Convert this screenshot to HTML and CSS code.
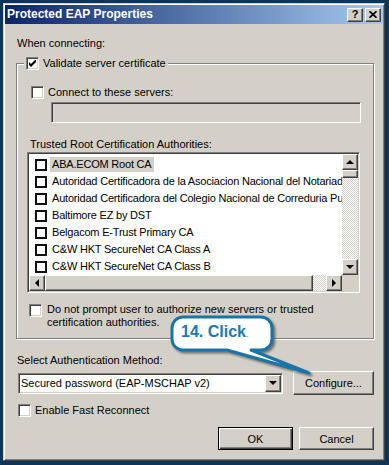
FILE: index.html
```html
<!DOCTYPE html>
<html lang="en">
<head>
  <meta charset="UTF-8">
  <title>Protected EAP Properties</title>
  <link rel="stylesheet" href="styles.css">
</head>
<body>
<div class="window">
  <div class="titlebar">
    <span class="title">Protected EAP Properties</span>
    <div class="tbtns">
      <span class="tbtn help">?</span>
      <span class="tbtn close"><svg width="8" height="7" viewBox="0 0 8 7"><path d="M0.5 0.3 L7.5 6.7 M7.5 0.3 L0.5 6.7" stroke="#000" stroke-width="1.7"/></svg></span>
    </div>
  </div>
  <div class="content">
    <div class="label first">When connecting:</div>
    <fieldset class="group">
      <legend><span class="chk"><svg width="7" height="7" viewBox="0 0 7 7"><path d="M0 2 L2 4 L7 -1 V2 L2 7 L0 5 Z" fill="#000"/></svg></span>Validate server certificate</legend>
      <div class="row connect"><span class="chk"></span>Connect to these servers:</div>
      <div class="textbox"></div>
      <div class="label trusted">Trusted Root Certification Authorities:</div>
      <div class="listbox">
        <div class="items">
          <div class="item"><span class="lchk"></span><span class="txt sel">ABA.ECOM Root CA</span></div>
          <div class="item"><span class="lchk"></span><span class="txt">Autoridad Certificadora de la Asociacion Nacional del Notariado Mexicano</span></div>
          <div class="item"><span class="lchk"></span><span class="txt">Autoridad Certificadora del Colegio Nacional de Correduria Publica Mexicana</span></div>
          <div class="item"><span class="lchk"></span><span class="txt">Baltimore EZ by DST</span></div>
          <div class="item"><span class="lchk"></span><span class="txt">Belgacom E-Trust Primary CA</span></div>
          <div class="item"><span class="lchk"></span><span class="txt">C&amp;W HKT SecureNet CA Class A</span></div>
          <div class="item"><span class="lchk"></span><span class="txt">C&amp;W HKT SecureNet CA Class B</span></div>
        </div>
        <div class="vscroll">
          <span class="sbtn up"></span>
          <span class="thumb vthumb"></span>
          <span class="track"></span>
          <span class="sbtn down"></span>
        </div>
        <div class="hscroll">
          <span class="sbtn left"></span>
          <span class="thumb hthumb"></span>
          <span class="track"></span>
          <span class="sbtn right"></span>
        </div>
        <div class="corner"></div>
      </div>
      <div class="row prompt"><span class="chk"></span><span>Do not prompt user to authorize new servers or trusted<br>certification authorities.</span></div>
    </fieldset>
    <div class="label method">Select Authentication Method:</div>
    <div class="methodrow">
      <div class="combo"><span class="combotext">Secured password (EAP-MSCHAP v2)</span><span class="sbtn down"></span></div>
      <button class="btn configure">Configure...</button>
    </div>
    <div class="row fast"><span class="chk"></span>Enable Fast Reconnect</div>
    <div class="actions">
      <button class="btn default">OK</button>
      <button class="btn">Cancel</button>
    </div>
  </div>
</div>
<div class="callout">
  <svg class="bubble" width="150" height="66" viewBox="0 0 150 66"><path d="M18 5 H96 A11 11 0 0 1 107 16 V27 A11 11 0 0 1 96 38 H86 L144 61 L62 38 H18 A11 11 0 0 1 7 27 V16 A11 11 0 0 1 18 5 Z" fill="#fff" stroke="#1b74a8" stroke-width="3" stroke-linejoin="round"/></svg>
  <span class="calltext">14. Click<span class="dot">.</span></span>
</div>
</body>
</html>
```

FILE: styles.css
```css
html body {
    margin: 0;
    padding: 0;
}
body {
    background: #0d3656;
    font-family: "Liberation Sans", Arial, sans-serif;
    font-size: 11px;
    line-height: 13px;
    color: #000;
}
.window {
    box-sizing: border-box;
    width: 382px;
    height: 458px;
    margin: 3px 0 0 3px;
    padding: 1px;
    background: #d4d0c8;
    border: 1px solid;
    border-color: #d4d0c8 #404040 #404040 #d4d0c8;
    box-shadow: inset 1px 1px #fff, inset -1px -1px #808080;
}
.titlebar {
    height: 19px;
    display: flex;
    align-items: center;
    justify-content: space-between;
    padding: 0 2px;
    background: linear-gradient(to right, #0a246a, #a6caf0);
}
.title {
    color: #fff;
    font-weight: bold;
    font-size: 12px;
}
.tbtns {
    display: flex;
    gap: 2px;
}
.tbtn, .sbtn, .thumb, .btn {
    box-sizing: border-box;
    background: #d4d0c8;
    border: 1px solid;
    border-color: #fff #404040 #404040 #fff;
    box-shadow: inset -1px -1px #808080;
}
.tbtn {
    width: 16px;
    height: 14px;
    display: flex;
    align-items: center;
    justify-content: center;
    font-weight: bold;
    font-size: 11px;
}
.content {
    padding: 13px 9px 0 11px;
}
.label.first, .label.method {
    margin-left: 1px;
}
.group {
    margin: 7px 0 0;
    padding: 0 13px 9px 10px;
    border: 1px solid #808080;
    box-shadow: inset 1px 1px #fff, 1px 1px #fff;
    min-width: 0;
}
.group legend {
    display: flex;
    align-items: center;
    gap: 4px;
    margin-left: -3px;
    padding: 0 2px;
    background: #d4d0c8;
}
.chk {
    box-sizing: border-box;
    width: 13px;
    height: 13px;
    flex: none;
    display: flex;
    align-items: center;
    justify-content: center;
    background: #fff;
    border: 1px solid;
    border-color: #808080 #fff #fff #808080;
    box-shadow: inset 1px 1px #404040, inset -1px -1px #d4d0c8;
}
.row {
    display: flex;
    align-items: center;
    gap: 4px;
}
.connect {
    margin: 16px 0 0 4px;
}
.textbox {
    box-sizing: border-box;
    width: 310px;
    height: 21px;
    margin: 3px 0 0 24px;
    border: 1px solid;
    border-color: #808080 #fff #fff #808080;
    box-shadow: inset 1px 1px #404040, inset -1px -1px #d4d0c8;
}
.trusted {
    margin: 15px 0 0 3px;
}
.listbox {
    box-sizing: border-box;
    height: 141px;
    margin-top: 1px;
    padding: 1px;
    display: grid;
    grid-template-columns: 1fr 16px;
    grid-template-rows: 121px 16px;
    background: #fff;
    border: 1px solid;
    border-color: #808080 #fff #fff #808080;
    box-shadow: inset 1px 1px #404040, inset -1px -1px #d4d0c8;
}
.items {
    overflow: hidden;
    padding-top: 2px;
}
.item {
    height: 17px;
    display: flex;
    align-items: center;
    gap: 3px;
    padding-left: 6px;
    white-space: nowrap;
    letter-spacing: -0.2px;
}
.lchk {
    box-sizing: border-box;
    width: 12px;
    height: 12px;
    flex: none;
    border: 2px solid #111;
    background: #fff;
}
.txt {
    padding: 0 2px;
    line-height: 15px;
}
.sel {
    background: #d4d0c8;
}
.vscroll {
    display: flex;
    flex-direction: column;
}
.hscroll {
    display: flex;
}
.sbtn {
    width: 16px;
    height: 16px;
    flex: none;
    display: flex;
    align-items: center;
    justify-content: center;
}
.sbtn::after {
    content: "";
    width: 0;
    height: 0;
}
.up::after {
    border: 4px solid transparent;
    border-top: 0;
    border-bottom: 4px solid #000;
}
.down::after {
    border: 4px solid transparent;
    border-bottom: 0;
    border-top: 4px solid #000;
}
.left::after {
    border: 4px solid transparent;
    border-left: 0;
    border-right: 4px solid #000;
}
.right::after {
    border: 4px solid transparent;
    border-right: 0;
    border-left: 4px solid #000;
}
.thumb {
    flex: none;
}
.vthumb {
    height: 8px;
}
.hthumb {
    width: 268px;
}
.track {
    flex: 1;
    background: repeating-conic-gradient(#fff 0 25%, #d4d0c8 0 50%) 0 0 / 2px 2px;
}
.corner {
    background: #d4d0c8;
}
.prompt {
    align-items: flex-start;
    gap: 5px;
    margin: 10px 0 0 2px;
}
.prompt .chk {
    margin-top: 1px;
}
.method {
    margin-top: 15px;
}
.methodrow {
    display: flex;
    align-items: center;
    margin-top: 4px;
    height: 24px;
}
.combo {
    box-sizing: border-box;
    width: 265px;
    height: 21px;
    margin-left: 2px;
    padding: 1px 1px 1px 2px;
    display: flex;
    align-items: center;
    justify-content: space-between;
    background: #fff;
    border: 1px solid;
    border-color: #808080 #fff #fff #808080;
    box-shadow: inset 1px 1px #404040, inset -1px -1px #d4d0c8;
}
.combo .sbtn {
    height: 17px;
}
.btn {
    font-family: inherit;
    font-size: 11px;
    color: #000;
    padding: 0;
}
.configure {
    width: 81px;
    height: 24px;
    margin-left: 10px;
}
.fast {
    margin: 9px 0 0 2px;
}
.actions {
    display: flex;
    justify-content: flex-end;
    gap: 6px;
    margin-top: 10px;
}
.actions .btn {
    width: 75px;
    height: 23px;
}
.btn.default {
    border: 1px solid #000;
    box-shadow: inset 1px 1px #fff, inset -1px -1px #404040, inset -2px -2px #808080;
}
.callout {
    position: absolute;
    left: 165px;
    top: 312px;
    width: 150px;
    height: 66px;
}
.bubble {
    position: absolute;
    left: 0;
    top: 0;
    filter: drop-shadow(2px 2px 1px rgba(0, 0, 0, 0.45));
}
.calltext {
    position: relative;
    display: block;
    padding: 11px 0 0 16px;
    font-weight: bold;
    font-size: 16px;
    line-height: 18px;
    color: #1a7ab4;
}
.dot {
    font-weight: normal;
    font-size: 11px;
    color: #888;
}
```
